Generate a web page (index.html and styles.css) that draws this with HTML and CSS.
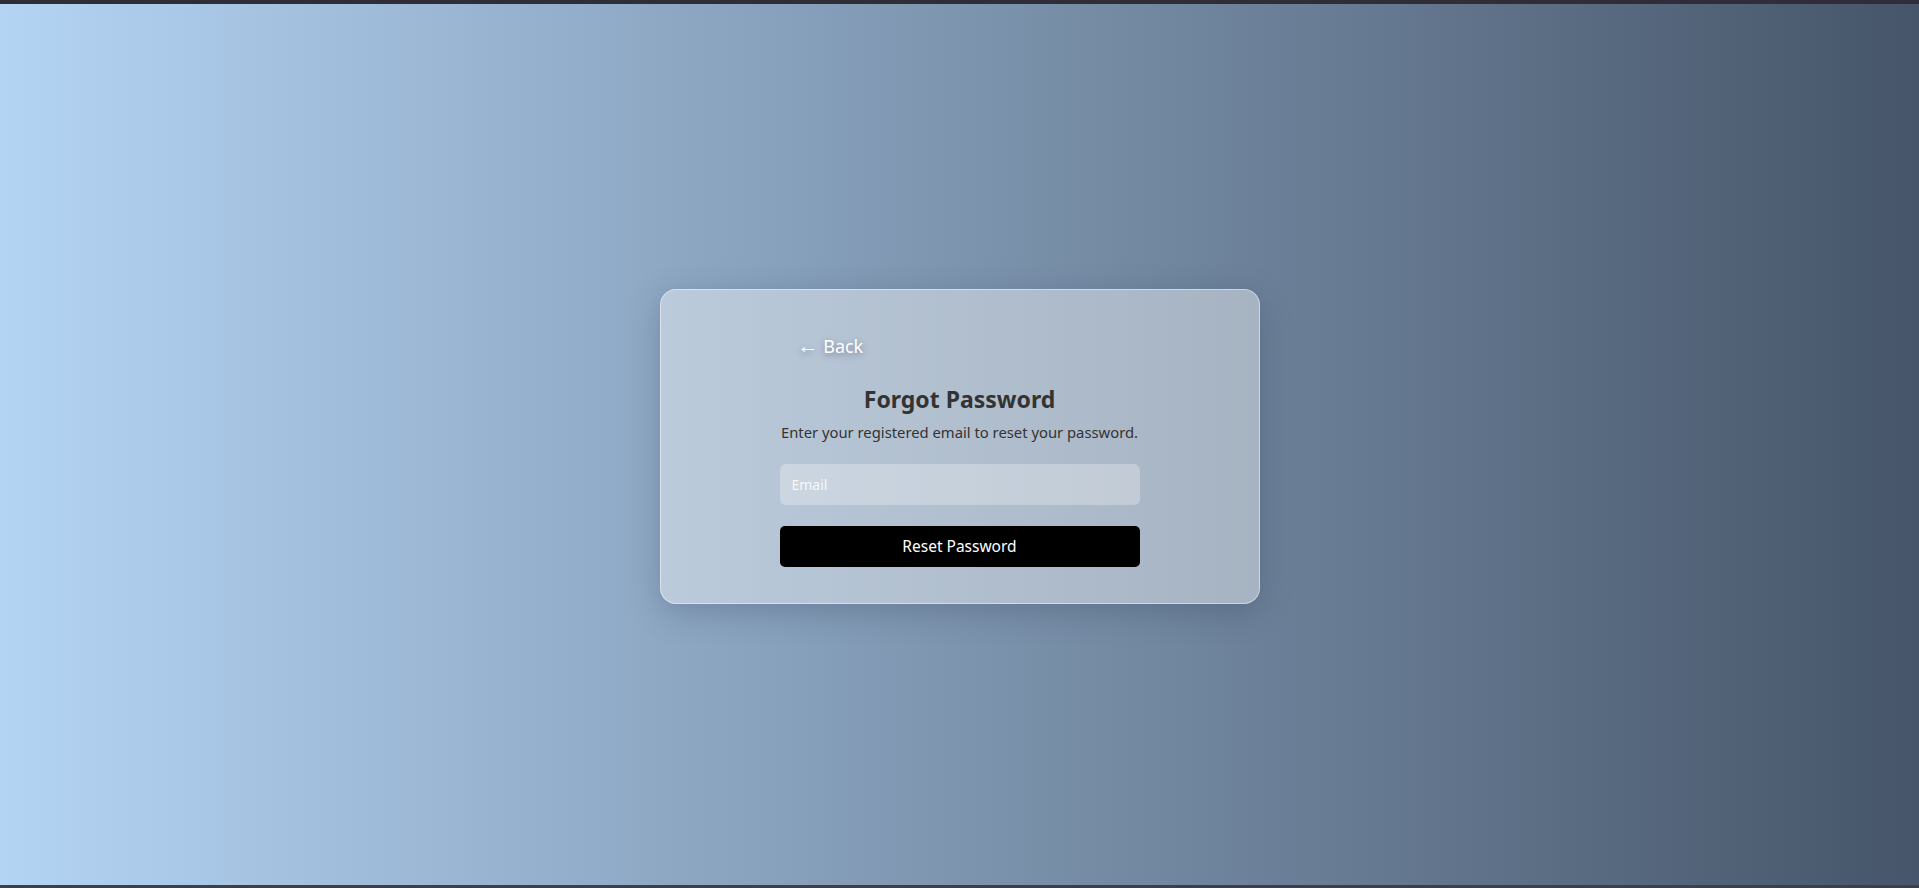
FILE: index.html
```html
<!DOCTYPE html>
<html lang="en">
<head>
<meta charset="utf-8">
<title>Forgot Password</title>
<link rel="stylesheet" href="styles.css">
</head>
<body>
<div class="page">
  <div class="card">
    <div class="inner">
      <button class="back" type="button"><span class="arrow">&larr;</span> Back</button>
      <h2 class="title">Forgot Password</h2>
      <p class="subtitle">Enter your registered email to reset your password.</p>
      <input class="email" type="email" placeholder="Email">
      <button class="reset" type="button">Reset Password</button>
    </div>
  </div>
</div>
</body>
</html>
```
FILE: styles.css
```css
html, body {
  margin: 0;
  padding: 0;
  height: 100%;
}
body {
  background: #2f2e38;
  font-family: "Noto Sans", "Open Sans", sans-serif;
}
.page {
  box-sizing: border-box;
  height: 888px;
  border-top: 4px solid #2f2e38;
  border-bottom: 3px solid #3b404b;
  background: linear-gradient(to right, #b4d4f4 0%, #465569 100%);
  display: flex;
  align-items: center;
  justify-content: center;
}
.card {
  box-sizing: border-box;
  width: 600px;
  padding: 38px 40px 36px;
  margin-top: 3px;
  border-radius: 16px;
  border: 1px solid rgba(255, 255, 255, 0.45);
  background: rgba(255, 255, 255, 0.4);
  box-shadow: 0 8px 32px rgba(30, 45, 70, 0.25);
  display: flex;
  justify-content: center;
}
.inner {
  width: 360px;
  display: flex;
  flex-direction: column;
  align-items: stretch;
}
.back {
  align-self: flex-start;
  background: none;
  border: none;
  color: #ffffff;
  font-family: inherit;
  font-size: 18px;
  line-height: 24px;
  padding: 6px 18px;
  text-shadow: 0 2px 6px rgba(40, 50, 70, 0.45);
  cursor: pointer;
}
.arrow {
  font-family: "Liberation Sans", sans-serif;
  font-size: 21px;
  line-height: 1;
}
.title {
  margin: 19px 0 0;
  text-align: center;
  font-size: 23px;
  font-weight: 700;
  color: #333333;
  line-height: 32px;
}
.subtitle {
  margin: 6px -10px 0;
  text-align: center;
  font-size: 14.8px;
  white-space: nowrap;
  color: #333333;
  line-height: 22px;
}
.email {
  box-sizing: border-box;
  margin-top: 21px;
  height: 41px;
  width: 100%;
  border: none;
  border-radius: 6px;
  background: rgba(255, 255, 255, 0.28);
  padding: 0 12px;
  font-family: inherit;
  font-size: 14px;
  color: #333;
  outline: none;
}
.email::placeholder {
  color: rgba(255, 255, 255, 0.85);
}
.reset {
  margin-top: 21px;
  height: 41px;
  width: 100%;
  border: none;
  border-radius: 5px;
  background: #000000;
  color: #ffffff;
  font-family: inherit;
  font-size: 15.5px;
  cursor: pointer;
}
```
